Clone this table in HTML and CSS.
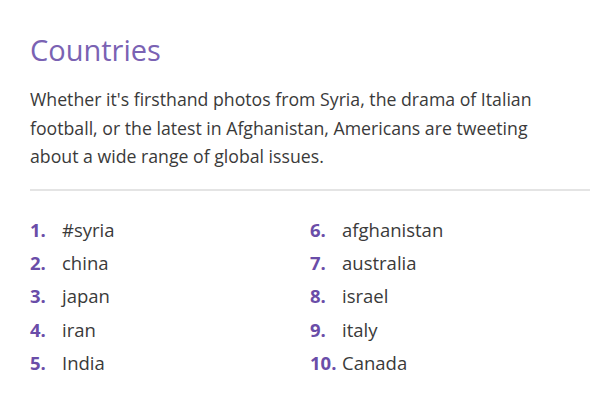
FILE: index.html
```html
<!DOCTYPE html>
<html>
<head>
<meta charset="utf-8">
<link rel="stylesheet" href="styles.css">
</head>
<body>
<section class="card">
  <h2 class="title">Countries</h2>
  <p class="intro">Whether it's firsthand photos from Syria, the drama of Italian football, or the latest in Afghanistan, Americans are tweeting about a wide range of global issues.</p>
  <hr class="rule">
  <ol class="list">
    <li><span class="num">1.</span><span class="name">#syria</span></li>
    <li><span class="num">2.</span><span class="name">china</span></li>
    <li><span class="num">3.</span><span class="name">japan</span></li>
    <li><span class="num">4.</span><span class="name">iran</span></li>
    <li><span class="num">5.</span><span class="name">India</span></li>
    <li><span class="num">6.</span><span class="name">afghanistan</span></li>
    <li><span class="num">7.</span><span class="name">australia</span></li>
    <li><span class="num">8.</span><span class="name">israel</span></li>
    <li><span class="num">9.</span><span class="name">italy</span></li>
    <li><span class="num">10.</span><span class="name">Canada</span></li>
  </ol>
</section>
</body>
</html>
```
FILE: styles.css
```css
html, body {
  margin: 0;
  padding: 0;
  background: #ffffff;
}
body {
  font-family: "Open Sans", "Lato", sans-serif;
  color: #3a3a3a;
}
.card {
  padding: 30px 24px 0 30px;
}
.title {
  margin: 0;
  font-size: 29px;
  font-weight: 400;
  line-height: 40px;
  color: #7a62b3;
}
.intro {
  margin: 15px 0 0;
  font-size: 17.7px;
  line-height: 28.5px;
  color: #3a3a3a;
  max-width: 530px;
}
.rule {
  margin: 18px 0 0;
  border: 0;
  height: 2px;
  background: #e4e4e4;
}
.list {
  list-style: none;
  margin: 22px 0 0;
  padding: 0;
  display: grid;
  grid-template-columns: 280px 1fr;
  grid-template-rows: repeat(5, 33.3px);
  grid-auto-flow: column;
  font-size: 18.5px;
}
.list li {
  display: flex;
  align-items: center;
}
.num {
  width: 32px;
  font-weight: 700;
  color: #6a4da8;
}
.name {
  color: #3a3a3a;
}
```
